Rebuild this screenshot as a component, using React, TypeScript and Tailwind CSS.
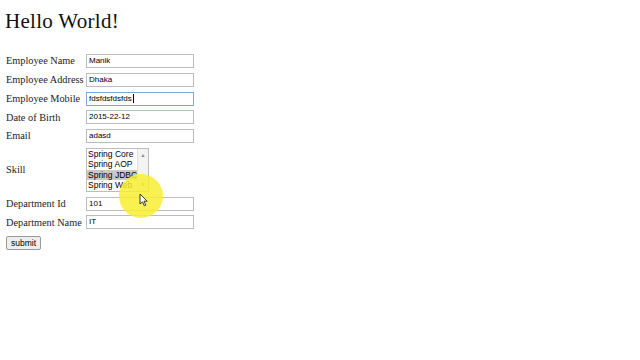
import React from "react";

const rows: { label: string; value: string; focus?: boolean }[] = [
  { label: "Employee Name", value: "Manik" },
  { label: "Employee Address", value: "Dhaka" },
  { label: "Employee Mobile", value: "fdsfdsfdsfds", focus: true },
  { label: "Date of Birth", value: "2015-22-12" },
  { label: "Email", value: "adasd" },
];

const skills = ["Spring Core", "Spring AOP", "Spring JDBC", "Spring Web"];

const Field: React.FC<{ value: string; focus?: boolean }> = ({ value, focus }) => (
  <div
    className={
      "w-[108px] h-[14px] bg-white text-[8px] leading-[12px] pl-[2px] text-black flex items-center " +
      (focus ? "border border-[#7ea6d8]" : "border border-[#bdbdbd]")
    }
    style={{ fontFamily: "'Liberation Sans', Arial, sans-serif" }}
  >
    {value}
    {focus && <span className="w-px h-[9px] bg-black ml-px" />}
  </div>
);

const Label: React.FC<{ children: React.ReactNode }> = ({ children }) => (
  <div className="w-[80px] text-[10.3px] text-[#222] whitespace-nowrap">{children}</div>
);

export default function App() {
  return (
    <div
      className="relative w-[640px] h-[360px] bg-white overflow-hidden pl-[5px] pt-[8px]"
      style={{ fontFamily: "'Liberation Serif', 'Times New Roman', serif" }}
    >
      <h1 className="text-[21px] leading-[26px] text-[#111] tracking-[0.3px]">Hello World!</h1>

      <div className="mt-[20px] flex flex-col gap-[4.75px] pl-[1px]">
        {rows.map((r) => (
          <div key={r.label} className="flex items-center h-[14px]">
            <Label>{r.label}</Label>
            <Field value={r.value} focus={r.focus} />
          </div>
        ))}

        <div className="flex items-center h-[44px]">
          <Label>Skill</Label>
          <div
            className="flex w-[63px] h-[44px] border border-[#bdbdbd] bg-white text-[8.5px] leading-[10.4px] text-black overflow-hidden"
            style={{ fontFamily: "'Liberation Sans', Arial, sans-serif" }}
          >
            <div className="flex-1 flex flex-col overflow-hidden">
              {skills.map((s) => (
                <div
                  key={s}
                  className={"pl-[1px] whitespace-nowrap " + (s === "Spring JDBC" ? "bg-[#c8c8c8]" : "")}
                >
                  {s}
                </div>
              ))}
            </div>
            <div className="w-[11px] shrink-0 bg-[#f3f3f3] border-l border-[#e0e0e0] flex flex-col justify-between items-center text-[5px] text-[#888] py-[1px]">
              <span>▲</span>
              <span>▼</span>
            </div>
          </div>
        </div>

        <div className="flex items-center h-[14px]">
          <Label>Department Id</Label>
          <Field value="101" />
        </div>
        <div className="flex items-center h-[14px]">
          <Label>Department Name</Label>
          <Field value="IT" />
        </div>
      </div>

      <button
        className="mt-[5px] ml-[1px] h-[14px] px-[4px] text-[8.5px] leading-[12px] border border-[#9a9a9a] bg-[#eeeeee] rounded-[2px] text-black"
        style={{ fontFamily: "'Liberation Sans', Arial, sans-serif" }}
      >
        submit
      </button>

      {/* cursor highlight */}
      <div className="absolute left-[119px] top-[174px] w-[44px] h-[44px] rounded-full bg-[#f7ef30] opacity-85" />
      <svg className="absolute left-[139px] top-[193px]" width="9" height="14" viewBox="0 0 9 14">
        <path d="M1 1 L1 11 L3.5 8.8 L5.3 12.8 L6.8 12.1 L5 8.2 L8.2 8.2 Z" fill="#fff" stroke="#222" strokeWidth="0.9" />
      </svg>
    </div>
  );
}
